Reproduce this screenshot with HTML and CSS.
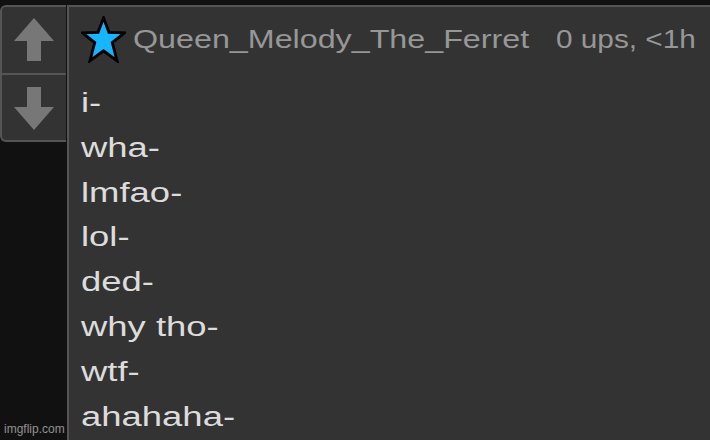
FILE: index.html
```html
<!DOCTYPE html>
<html lang="en">
<head>
  <meta charset="UTF-8">
  <meta name="viewport" content="width=device-width, initial-scale=1.0">
  <title>Comment</title>
  <link rel="stylesheet" href="styles.css">
</head>
<body>
  <div class="page">
    <div class="votes">
      <div class="vote">
        <svg width="40" height="43" viewBox="0 0 40 43"><polygon points="20,0 40,23 27,23 27,43 13,43 13,23 0,23" fill="#777"/></svg>
      </div>
      <div class="vote vote-down">
        <svg width="40" height="43" viewBox="0 0 40 43"><polygon points="20,43 40,20 27,20 27,0 13,0 13,20 0,20" fill="#777"/></svg>
      </div>
    </div>

    <div class="comment">
      <div class="head">
        <svg class="star" width="45" height="47" viewBox="0 0 44 46">
          <polygon points="22,1.8 27.3,16 42.5,16.5 30.6,26 35.2,43.8 22,34 8.8,43.8 13.4,26 1.5,16.5 16.7,16" fill="#18b4fd" stroke="#000" stroke-width="2.8" stroke-linejoin="miter"/>
        </svg>
        <div class="name"><span>Queen_Melody_The_Ferret</span></div>
        <div class="meta"><span>0 ups, &lt;1h</span></div>
      </div>

      <div class="text">
        <div>i-</div>
        <div>wha-</div>
        <div>lmfao-</div>
        <div>lol-</div>
        <div>ded-</div>
        <div>why tho-</div>
        <div>wtf-</div>
        <div>ahahaha-</div>
      </div>
    </div>
  </div>

  <div class="watermark">imgflip.com</div>
</body>
</html>
```

FILE: styles.css
```css
/* General Styles */
body {
  margin: 0;
  padding: 0;
  font-family: 'Liberation Sans', Arial, sans-serif;
  background-color: #111111;
  overflow: hidden;
  height: 440px;
}

.page {
  display: flex;
  align-items: flex-start;
  padding-top: 5px;
  height: 435px;
}

/* Vote buttons */
.votes {
  width: 64px;
  height: 133px;
  background-color: #333333;
  border: 2px solid #555555;
  border-right: none;
  border-radius: 6px 0 0 6px;
  display: flex;
  flex-direction: column;
  margin-right: 1px;
}

.vote {
  flex: 1;
  display: flex;
  justify-content: center;
  align-items: center;
  padding-bottom: 2px;
}

.vote-down {
  border-top: 2px solid #555555;
  padding-bottom: 0;
  padding-top: 1px;
}

/* Comment panel */
.comment {
  flex: 1;
  height: 433px;
  background-color: #333333;
  border-top: 2px solid #555555;
  border-left: 2px solid #555555;
  padding: 10px 12px 0;
  overflow: hidden;
}

.head {
  display: flex;
  align-items: center;
  height: 45px;
  color: #979797;
  font-size: 25px;
}

.star {
  margin-right: 7px;
  flex-shrink: 0;
}

.name {
  width: 397px;
  margin-right: 26px;
  white-space: nowrap;
}

.name span,
.meta span {
  display: inline-block;
  transform-origin: 0 50%;
}

.name span {
  transform: scaleX(1.29);
}

.meta {
  white-space: nowrap;
}

.meta span {
  transform: scaleX(1.19);
}

.text {
  margin-top: 19px;
  color: #dcdcdc;
  font-size: 27px;
  line-height: 44.8px;
  transform: scaleX(1.35);
  transform-origin: 0 0;
  white-space: nowrap;
}

.watermark {
  position: absolute;
  left: 4px;
  bottom: 4px;
  font-size: 12px;
  color: #929292;
}
```
